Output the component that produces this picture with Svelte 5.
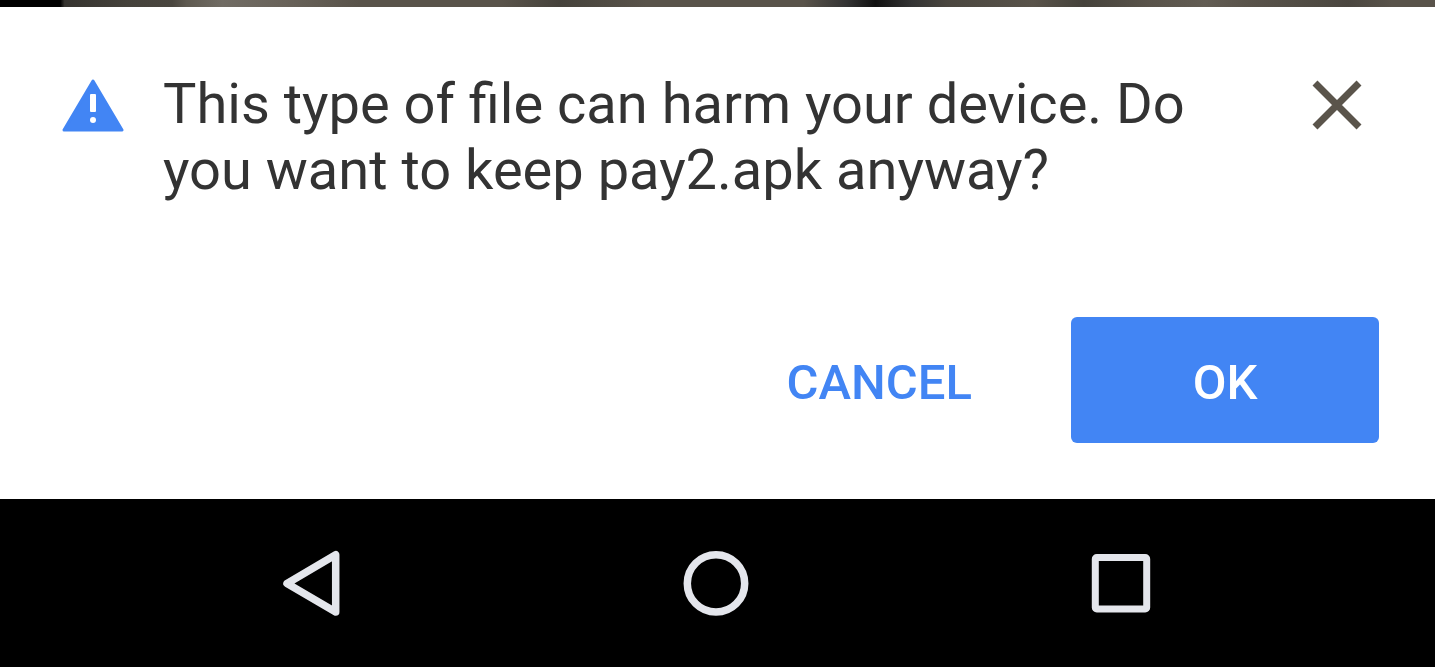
<script>
  let open = $state(true);
  const close = () => (open = false);
</script>

<div class="screen">
  <div class="page-edge"></div>
  <main>
    {#if open}
      <div class="message">
        <svg class="warning" viewBox="0 0 62 54" aria-hidden="true">
          <path d="M31 2 L60 51 H2 Z" fill="#4285f4" stroke="#4285f4" stroke-width="3" stroke-linejoin="round" />
          <rect x="28" y="15" width="6" height="18" rx="1" fill="#fff" />
          <circle cx="31" cy="41" r="3" fill="#fff" />
        </svg>
        <p>This type of file can harm your device. Do you want to keep pay2.apk anyway?</p>
        <button class="close" aria-label="Close" onclick={close}>
          <svg viewBox="0 0 50 50"><path d="M3 3 L47 47 M47 3 L3 47" stroke="#5a544b" stroke-width="7" /></svg>
        </button>
      </div>
      <div class="actions">
        <button class="cancel" onclick={close}>CANCEL</button>
        <button class="ok" onclick={close}>OK</button>
      </div>
    {/if}
  </main>
  <nav aria-label="System">
    <button aria-label="Back">
      <svg viewBox="0 0 68 68"><path d="M10 34.4 L58.7 5.7 V63 Z" stroke-width="7.5" stroke-linejoin="round" /></svg>
    </button>
    <button aria-label="Home">
      <svg viewBox="0 0 68 68"><circle cx="34" cy="34.4" r="28.7" stroke-width="7.5" /></svg>
    </button>
    <button aria-label="Recent apps">
      <svg viewBox="0 0 68 68"><rect x="8.3" y="8.6" width="51.4" height="51.4" rx="1.5" stroke-width="7" /></svg>
    </button>
  </nav>
</div>

<style>
  :global(body) { margin: 0; background: #000; }
  .screen { display: flex; flex-direction: column; min-height: 100vh; font-family: Roboto, sans-serif; }
  .page-edge {
    height: 7px;
    background: linear-gradient(90deg, #000 4.2%, #35332f 4.5%, #45423b 9%, #4a463f 12%, #5e5950 13%, #716c64 15.5%, #686259 20%, #59534a 25%, #59534a 35%, #45423b 39%, #59534a 45%, #59534a 56%, #333 59%, #111 61%, #333 63.5%, #4a463f 66%, #59534a 72%, #45423b 75.5%, #59534a 80%, #625c53 84%, #59534a 87%, #4a463f 94%, #59534a 97%);
  }
  main { flex: 1; display: flex; flex-direction: column; justify-content: space-between; padding: 64px 56px 56px; background: #fff; box-sizing: border-box; }
  .message { display: flex; align-items: flex-start; padding-left: 6px; }
  .warning { flex: none; width: 62px; height: 54px; margin-top: 8px; }
  p { flex: 1; margin: 0 112px 0 39px; color: #333; font-size: 56px; line-height: 66px; }
  button { border: 0; padding: 0; background: none; font: inherit; cursor: pointer; }
  svg { display: block; }
  .close { flex: none; width: 50px; height: 50px; margin: 9px 17px 0 0; }
  .actions { display: flex; justify-content: flex-end; gap: 40px; font-size: 49px; }
  .actions button { height: 126px; padding: 4px 59px 0; border-radius: 6px; font-weight: 500; }
  .cancel { color: #4285f4; }
  .actions .ok { width: 308px; color: #fff; background: #4285f4; }
  nav { display: flex; justify-content: center; gap: 337px; height: 168px; padding-right: 4px; background: #000; }
  nav button { display: flex; align-items: center; }
  nav svg { width: 68px; height: 68px; fill: none; stroke: #e4e6ec; }
</style>
